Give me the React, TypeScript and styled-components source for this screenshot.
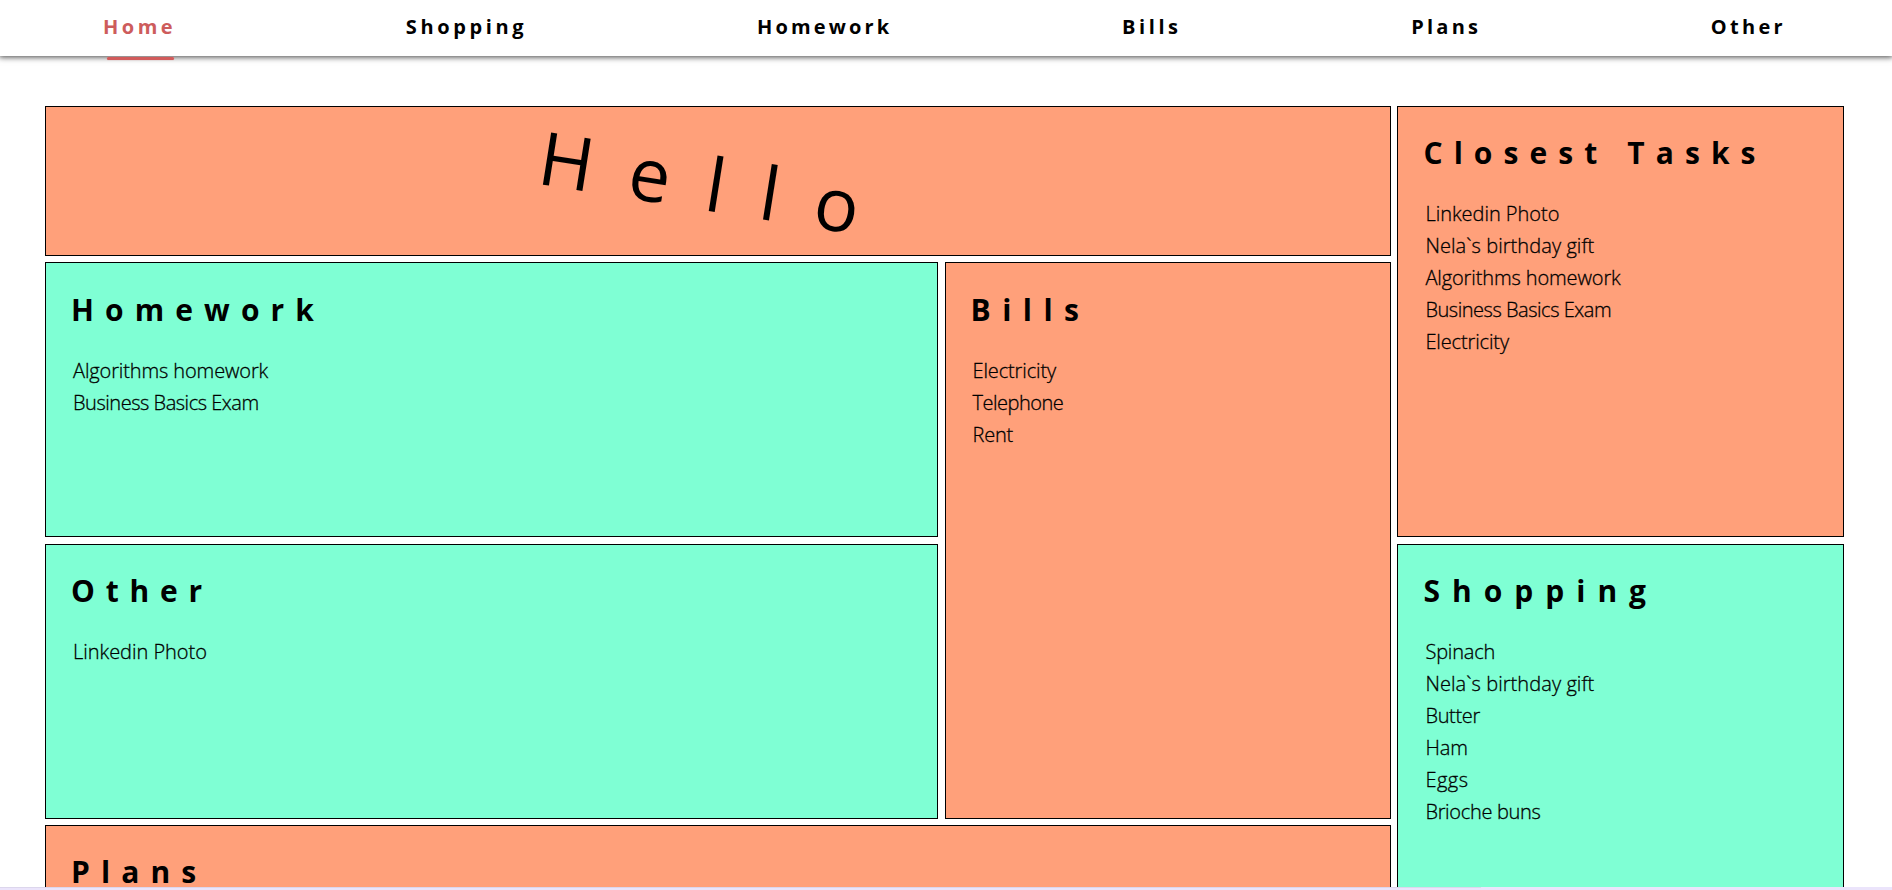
import React from 'react';
import styled, { createGlobalStyle } from 'styled-components';

const GlobalStyle = createGlobalStyle`
  * { box-sizing: border-box; }
  html, body { margin: 0; padding: 0; }
  body {
    height: 890px;
    overflow: hidden;
    background: #fff;
    color: #000;
    font-family: 'Segoe UI', 'Open Sans', 'Noto Sans', sans-serif;
  }
`;

const Page = styled.div`
  display: flex;
  flex-direction: column;
  height: 890px;
  overflow: hidden;
  position: relative;
`;

const Header = styled.header`
  flex: none;
  height: 56px;
  background: #fff;
  box-shadow: 0 0 6px 1px rgba(0, 0, 0, 0.75);
`;

const Nav = styled.nav`
  display: flex;
  justify-content: space-between;
  padding: 0 106px 0 103px;
`;

const NavLink = styled.a<{ $active?: boolean; $spacing: number }>`
  position: relative;
  height: 56px;
  font-size: 20px;
  font-weight: 700;
  line-height: 54px;
  letter-spacing: ${(p) => p.$spacing}px;
  white-space: nowrap;
  text-decoration: none;
  color: ${(p) => (p.$active ? '#cd5c5c' : '#000')};
`;

const ActiveBar = styled.span`
  position: absolute;
  left: 4px;
  width: 67px;
  top: 57px;
  height: 3px;
  border-radius: 2px;
  background: #d25b5b;
  box-shadow: 0 0 1px #e08a8a;
`;

const Board = styled.main`
  flex: none;
  display: grid;
  width: 1799px;
  margin: 50px 0 0 45px;
  gap: 6.4px;
  grid-template-columns: 2fr 1fr 1fr;
  grid-template-rows: 150px 275px 275px 275px;
  grid-template-areas:
    'hello hello closest'
    'homework bills closest'
    'other bills shopping'
    'plans plans shopping';
`;

const tones = { salmon: '#ffa07a', mint: '#7fffd4' };

const Card = styled.section<{ $area: string; $tone: keyof typeof tones }>`
  grid-area: ${(p) => p.$area};
  min-width: 0;
  border: 1px solid #000;
  background: ${(p) => tones[p.$tone]};
  padding: 26.2px 25px 25px;
`;

const HelloCard = styled(Card)`
  display: flex;
  align-items: center;
  justify-content: center;
  padding: 6px 0 0;
`;

const Greeting = styled.div`
  font-size: 74px;
  line-height: 98px;
  letter-spacing: 36.3px;
  transform: rotate(9deg);
`;

const Title = styled.h2<{ $spacing: number }>`
  margin: 0 0 25.3px;
  font-size: 30px;
  font-weight: 700;
  line-height: 40px;
  letter-spacing: ${(p) => p.$spacing}px;
  white-space: nowrap;
`;

const TaskList = styled.ul`
  list-style: none;
  margin: 0;
  padding: 0 0 0 2px;
`;

const Task = styled.li<{ $spacing: number }>`
  font-size: 20px;
  font-weight: 300;
  line-height: 32px;
  letter-spacing: ${(p) => p.$spacing}px;
  white-space: nowrap;
  -webkit-text-stroke: 0.3px #000;
`;

const BottomStrip = styled.div`
  position: absolute;
  left: 0;
  right: 0;
  bottom: 0;
  height: 3px;
  background: #ebe4fb;
`;

const StripProgress = styled.div`
  width: 1481px;
  height: 1px;
  background: #dcd6ec;
`;

type Label = [text: string, spacing: number];

const links: Label[] = [
  ['Home', 3.5],
  ['Shopping', 3.63],
  ['Homework', 3.15],
  ['Bills', 3.56],
  ['Plans', 3.2],
  ['Other', 3.3],
];

const linkedin: Label = ['Linkedin Photo', -0.03];
const gift: Label = ['Nela`s birthday gift', 0.07];
const algorithms: Label = ['Algorithms homework', -0.12];
const exam: Label = ['Business Basics Exam', -0.47];
const electricity: Label = ['Electricity', -0.13];

const cards: { area: string; tone: keyof typeof tones; title: Label; tasks: Label[] }[] = [
  { area: 'closest', tone: 'salmon', title: ['Closest Tasks', 11.08], tasks: [linkedin, gift, algorithms, exam, electricity] },
  { area: 'homework', tone: 'mint', title: ['Homework', 11.1], tasks: [algorithms, exam] },
  { area: 'bills', tone: 'salmon', title: ['Bills', 11.5], tasks: [electricity, ['Telephone', -0.5], ['Rent', -0.2]] },
  { area: 'other', tone: 'mint', title: ['Other', 10.8], tasks: [linkedin] },
  {
    area: 'shopping',
    tone: 'mint',
    title: ['Shopping', 12],
    tasks: [['Spinach', -0.2], gift, ['Butter', -0.35], ['Ham', -0.09], ['Eggs', 0.5], ['Brioche buns', -0.32]],
  },
  { area: 'plans', tone: 'salmon', title: ['Plans', 11.12], tasks: [] },
];

export default function App() {
  return (
    <Page>
      <GlobalStyle />
      <Header>
        <Nav>
          {links.map(([text, spacing], i) => (
            <NavLink key={text} $active={i === 0} $spacing={spacing}>
              {text}
              {i === 0 && <ActiveBar />}
            </NavLink>
          ))}
        </Nav>
      </Header>
      <Board>
        <HelloCard $area="hello" $tone="salmon">
          <Greeting>Hello</Greeting>
        </HelloCard>
        {cards.map((card) => (
          <Card key={card.area} $area={card.area} $tone={card.tone}>
            <Title $spacing={card.title[1]}>{card.title[0]}</Title>
            <TaskList>
              {card.tasks.map(([text, spacing]) => (
                <Task key={text} $spacing={spacing}>
                  {text}
                </Task>
              ))}
            </TaskList>
          </Card>
        ))}
      </Board>
      <BottomStrip>
        <StripProgress />
      </BottomStrip>
    </Page>
  );
}
